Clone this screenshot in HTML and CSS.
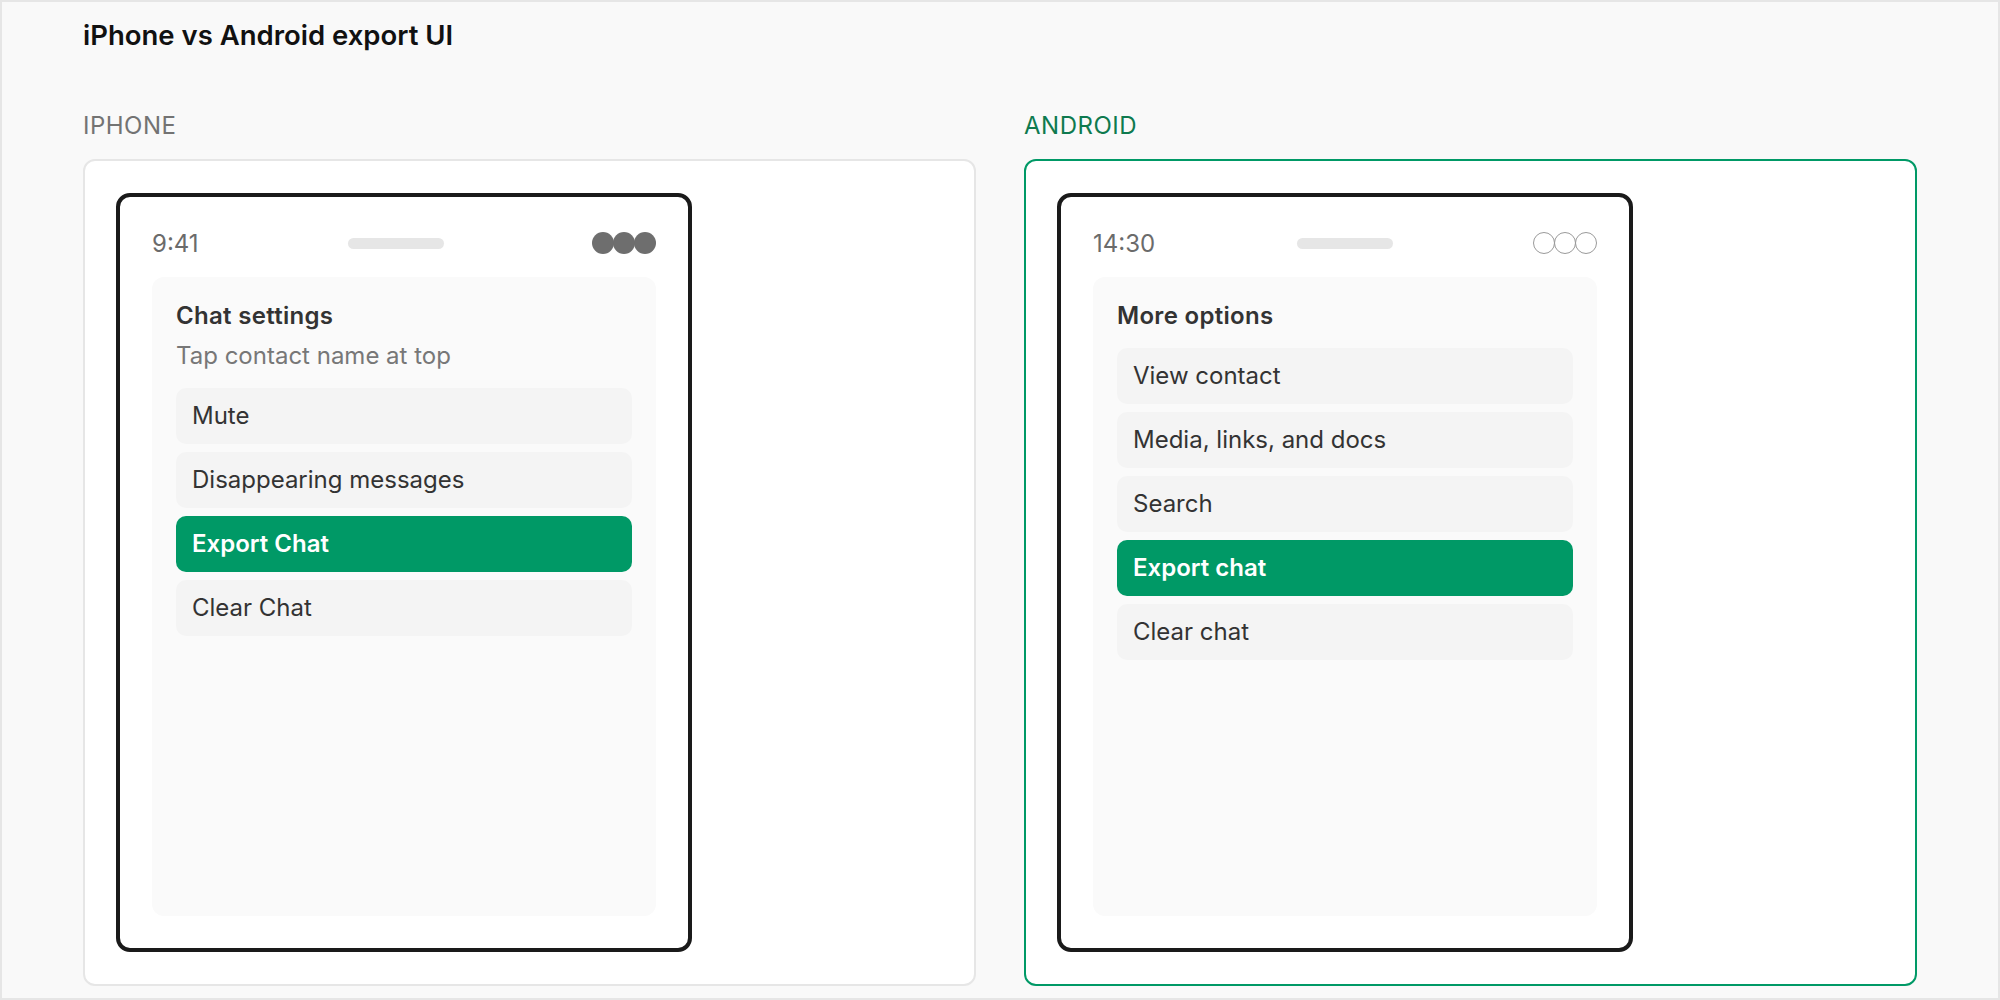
FILE: index.html
```html
<!DOCTYPE html>
<html>
<head>
    <title>iPhone vs Android export UI</title>
    <meta charset="utf-8">
    <meta name="viewport" content="width=device-width, initial-scale=1">
    <link rel="stylesheet" href="styles.css">
</head>
<body>
    <div class="page">
        <h1 class="page-title">iPhone vs Android export UI</h1>

        <div class="compare">
            <!-- iPhone: settings sheet opened from the contact name -->
            <section class="platform">
                <div class="platform-label">IPHONE</div>
                <div class="platform-card">
                    <div class="phone">
                        <div class="status-bar">
                            <span class="clock">9:41</span>
                            <span class="notch"></span>
                            <span class="signal filled"><i></i><i></i><i></i></span>
                        </div>
                        <div class="screen">
                            <div class="screen-title">Chat settings</div>
                            <div class="screen-hint">Tap contact name at top</div>
                            <ul class="menu">
                                <li>Mute</li>
                                <li>Disappearing messages</li>
                                <li class="active">Export Chat</li>
                                <li>Clear Chat</li>
                            </ul>
                        </div>
                    </div>
                </div>
            </section>

            <!-- Android: overflow menu -->
            <section class="platform android">
                <div class="platform-label">ANDROID</div>
                <div class="platform-card">
                    <div class="phone">
                        <div class="status-bar">
                            <span class="clock">14:30</span>
                            <span class="notch"></span>
                            <span class="signal outline"><i></i><i></i><i></i></span>
                        </div>
                        <div class="screen">
                            <div class="screen-title">More options</div>
                            <ul class="menu">
                                <li>View contact</li>
                                <li>Media, links, and docs</li>
                                <li>Search</li>
                                <li class="active">Export chat</li>
                                <li>Clear chat</li>
                            </ul>
                        </div>
                    </div>
                </div>
            </section>
        </div>
    </div>
</body>
</html>
```

FILE: styles.css
```css
* {
    box-sizing: border-box;
}
body {
    margin: 0;
    font-family: Inter, "Noto Sans", Arial, sans-serif;
    background-color: #f9f9f9;
    color: #333;
}
.page {
    min-height: 100vh;
    border: 2px solid #e6e6e6;
    padding: 18px 81px 0;
}
.page-title {
    margin: 0;
    font-size: 27.5px;
    line-height: 30px;
    font-weight: 600;
    color: #111;
}
.compare {
    display: grid;
    grid-template-columns: 1fr 1fr;
    gap: 48px;
    margin-top: 62px;
}
.platform-label {
    font-size: 24px;
    line-height: 28px;
    letter-spacing: 0.5px;
    color: #737373;
    margin-bottom: 19px;
}
.android .platform-label {
    color: #0e7a4f;
}
.platform-card {
    background-color: #fff;
    border: 2px solid #e6e6e6;
    border-radius: 12px;
    padding: 32px 31px;
}
.android .platform-card {
    border-color: #009966;
}

/* phone frame */
.phone {
    width: 576px;
    height: 759px;
    border: 4px solid #1a1a1a;
    border-radius: 14px;
    padding: 32px;
    display: flex;
    flex-direction: column;
}
.status-bar {
    display: flex;
    align-items: center;
    justify-content: space-between;
    height: 28px;
    margin-bottom: 20px;
}
.clock {
    font-size: 24px;
    color: #6b6b6b;
}
.notch {
    width: 96px;
    height: 11px;
    border-radius: 6px;
    background-color: #e6e6e6;
}
.signal {
    display: flex;
}
.signal i {
    width: 22px;
    height: 22px;
    border-radius: 50%;
    margin-left: -1px;
}
.signal.filled i {
    background-color: #6e6e6e;
}
.signal.outline i {
    border: 1px solid #9a9a9a;
}

/* screen contents */
.screen {
    flex: 1;
    background-color: #fafafa;
    border-radius: 12px;
    padding: 25px 24px 24px;
}
.screen-title {
    font-size: 24px;
    line-height: 28px;
    font-weight: 600;
    letter-spacing: 0.3px;
    color: #333;
    margin-bottom: 12px;
}
.screen-hint {
    font-size: 24px;
    line-height: 28px;
    color: #777;
}
.menu {
    list-style: none;
    margin: 18px 0 0;
    padding: 0;
    display: flex;
    flex-direction: column;
    gap: 8px;
}
.menu li {
    font-size: 24px;
    line-height: 28px;
    padding: 14px 16px;
    border-radius: 10px;
    background-color: #f4f4f4;
    color: #333;
}
.menu li.active {
    background-color: #009966;
    color: #fff;
    font-weight: 600;
}
```
